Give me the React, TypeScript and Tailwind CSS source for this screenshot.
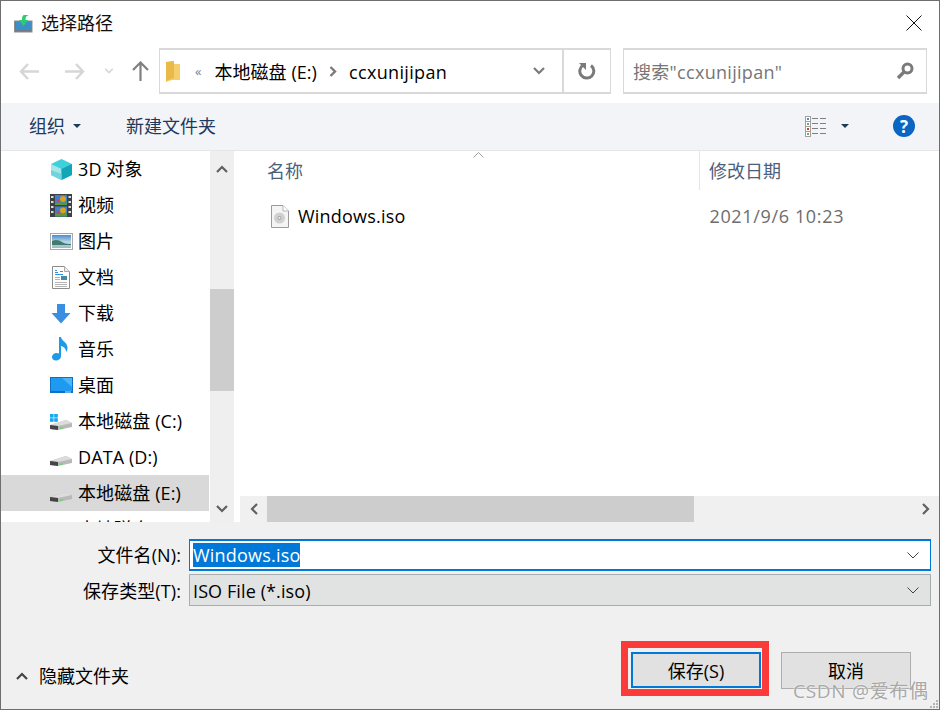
import type { ReactNode } from "react";

function CubeIcon() {
  return (
    <svg width="23" height="23" viewBox="0 0 23 23">
      <path d="M11.500 1 22 6v11l-10.500 5L1 17V6z" fill="#3fd0dc" />
      <path d="M1 6l10.500 5v11L1 17z" fill="#a5e6ea" />
      <path d="M11.500 11L22 6v11l-10.500 5z" fill="#12a5b8" />
      <path d="M1 12l10.500 4v6L1 17z" fill="#6fd4dc" />
    </svg>
  );
}

function VideoIcon() {
  return (
    <svg width="23" height="23" viewBox="0 0 23 23">
      <rect x="0" y="0" width="22" height="23" fill="#3c4145" />
      <rect x="1" y="2" width="2.500" height="2" fill="#ddd" />
      <rect x="1" y="7" width="2.500" height="2" fill="#ddd" />
      <rect x="1" y="12" width="2.500" height="2" fill="#ddd" />
      <rect x="1" y="17" width="2.500" height="2" fill="#ddd" />
      <rect x="18.500" y="2" width="2.500" height="2" fill="#ddd" />
      <rect x="18.500" y="7" width="2.500" height="2" fill="#ddd" />
      <rect x="18.500" y="12" width="2.500" height="2" fill="#ddd" />
      <rect x="18.500" y="17" width="2.500" height="2" fill="#ddd" />
      <rect x="5" y="1" width="12" height="10" fill="#3f7fd0" />
      <rect x="5" y="12.500" width="12" height="10" fill="#3f7fd0" />
      <rect x="5" y="8.500" width="12" height="2.500" fill="#5a9a3a" />
      <rect x="5" y="20" width="12" height="2.500" fill="#5a9a3a" />
      <circle cx="13" cy="5" r="3" fill="#d9a21f" />
      <circle cx="13" cy="16.500" r="3" fill="#d9a21f" />
      <circle cx="8" cy="7" r="1.500" fill="#d23c6a" />
      <circle cx="8" cy="18" r="1.500" fill="#d23c6a" />
    </svg>
  );
}

function PictureIcon() {
  return (
    <svg width="23" height="17" viewBox="0 0 23 17">
      <rect x="0.500" y="0.500" width="22" height="16" fill="#fff" stroke="#a9a9a9" />
      <defs>
        <linearGradient id="sky" x1="0" y1="0" x2="0" y2="1">
          <stop offset="0" stopColor="#4a8fd0" />
          <stop offset="0.550" stopColor="#bcd6e8" />
          <stop offset="1" stopColor="#9fb8c0" />
        </linearGradient>
      </defs>
      <rect x="2" y="2" width="19" height="13" fill="url(#sky)" />
      <path d="M2 8c4-2 7-1 10 1s6 2 9 2v1H2z" fill="#3f7d6a" />
    </svg>
  );
}

function DocumentIcon() {
  return (
    <svg width="18" height="23" viewBox="0 0 18 23">
      <path d="M.5.500h12l5 5v17H.5z" fill="#fff" stroke="#8d8d8d" />
      <path d="M12.500.500v5h5" fill="#eee" stroke="#aaa" />
      <path d="M3 6.500h3M8 5.500h3M3 8.500h8M3 4.500h2" stroke="#2f8fe0" />
      <rect x="9" y="10" width="6" height="4" fill="#4a8aa0" />
      <path d="M3 11.500h5M3 13.500h5M3 16.500h12M3 18.500h12M3 20.500h12" stroke="#b5b5b5" />
    </svg>
  );
}

function DownloadIcon() {
  return (
    <svg width="20" height="21" viewBox="0 0 20 21">
      <path d="M6 1h8v9h5.500L10 20.500.5 10H6z" fill="#3a8fe0" />
    </svg>
  );
}

function MusicIcon() {
  return (
    <svg width="18" height="24" viewBox="0 0 18 24">
      <path
        d="M7 0h2c.5 4 6.500 5 6.500 11 0 1.500-.5 3-1.500 4 .3-3-2.500-5.500-5-6v10c0 2.800-2.500 4.500-5 4.500S0 22 0 20s2-4 4.500-4c1 0 1.800.2 2.500.6z"
        fill="#1e9be8"
      />
    </svg>
  );
}

function DesktopIcon() {
  return (
    <svg width="23" height="16" viewBox="0 0 23 16">
      <rect width="23" height="16" fill="#0f6fc6" />
      <rect x="1" y="1" width="21" height="13" fill="#1e9bf0" />
      <path d="M12 1h10v9z" fill="#4db5f5" />
      <rect x="15" y="14.500" width="6" height="1" fill="#bfe3fa" />
    </svg>
  );
}

function DriveIcon({ windows }: { windows?: boolean }) {
  return (
    <svg width="23" height="18" viewBox="0 0 23 18">
      {windows && (
        <g fill="#14a9ee">
          <rect x="0" y="2" width="3.600" height="3.600" />
          <rect x="4.200" y="2" width="3.600" height="3.600" />
          <rect x="0" y="6.200" width="3.600" height="3.600" />
          <rect x="4.200" y="6.200" width="3.600" height="3.600" />
        </g>
      )}
      <path d="M0 13l16-5 6 3v4L8 18l-8-1z" fill="#b9b9b9" />
      <path d="M0 13l16-5 6 3-14 3z" fill="#dcdcdc" />
      <path d="M0 13l8 1v4l-8-1z" fill="#454545" />
      <path d="M10 16.500l3-.7" stroke="#5fd35f" />
    </svg>
  );
}

function SaveDialogIcon() {
  return (
    <svg width="19" height="19" viewBox="0 0 19 19">
      <rect x="0.500" y="7" width="17.500" height="11" fill="#6b7a85" stroke="#8a8f92" />
      <rect x="2" y="8" width="15" height="8" fill="#3d8fc8" />
      <path d="M10 1h4c0 0 .5 0 0 .5-2 .5-2.500 2-2.500 4.500H14l-4.500 6L5 6h3c0-3 .5-4.500 2-5z" fill="#2ecc71" />
    </svg>
  );
}

function Chevron({ up, className }: { up?: boolean; className?: string }) {
  return (
    <svg width="12" height="8" viewBox="0 0 12 8" className={className}>
      <path
        d={up ? "M1 7l5-5 5 5" : "M1 1l5 5 5-5"}
        fill="none"
        stroke="currentColor"
        strokeWidth="2.200"
      />
    </svg>
  );
}

function SmallCombo() {
  return (
    <svg width="12" height="7" viewBox="0 0 12 7">
      <path d="M.5.500l5.500 5.500 5.500-5.500" fill="none" stroke="#444" />
    </svg>
  );
}

function Caret({ color }: { color: string }) {
  return (
    <svg width="8" height="4" viewBox="0 0 8 4">
      <path d="M0 0h8L4 4z" fill={color} />
    </svg>
  );
}

function ViewIcon() {
  return (
    <svg width="22" height="21" viewBox="0 0 22 21">
      <rect x="0.500" y="0.500" width="5" height="20" fill="#fff" stroke="#a0a0a0" />
      <path d="M1 5.500h4M1 10.500h4M1 15.500h4" stroke="#a0a0a0" />
      <rect x="2" y="2" width="2" height="2" fill="#4a90c0" />
      <rect x="2" y="7" width="2" height="2" fill="#8aa060" />
      <rect x="2" y="12" width="2" height="2" fill="#d04020" />
      <rect x="2" y="17" width="2" height="2" fill="#8aa060" />
      <path d="M7 2.500h6M15 2.500h6M7 7.500h6M15 7.500h6M7 12.500h6M15 12.500h6M7 17.500h6M15 17.500h6" stroke="#808080" />
    </svg>
  );
}

function IsoIcon() {
  return (
    <svg width="18" height="23" viewBox="0 0 18 23">
      <path d="M.5.500h11.500l5.500 5.500v16.500H.5z" fill="#f4f4f4" stroke="#9a9a9a" />
      <path d="M12 .500V6h5.500" fill="#fff" stroke="#b5b5b5" />
      <circle cx="8.500" cy="13" r="5.500" fill="#d0d0d0" />
      <circle cx="8.500" cy="13" r="2" fill="#a8a8a8" />
      <circle cx="8.500" cy="13" r="1" fill="#eee" />
    </svg>
  );
}

function NavRow({ icon, label, selected }: { icon: ReactNode; label: string; selected?: boolean }) {
  return (
    <div className={`h-[36px] flex items-center shrink-0 ${selected ? "bg-[#d9d9d9]" : ""}`}>
      <div className="w-[49px] shrink-0" />
      <div className="w-[28px] shrink-0 flex justify-center -ml-[3px] mr-[3px]">{icon}</div>
      <span className="whitespace-nowrap tracking-[0.1px]">{label}</span>
    </div>
  );
}

export default function App() {
  return (
    <div className="relative w-[940px] h-[710px] overflow-hidden flex flex-col bg-white border border-[#6e6e6e] text-[18px] leading-[24px] text-black font-['Open_Sans','Noto_Sans_CJK_SC',sans-serif]">
      <div className="h-[44px] shrink-0 flex items-center pl-[13px] pr-[17px]">
        <SaveDialogIcon />
        <span className="ml-[8px] text-[#111]">选择路径</span>
        <svg width="16" height="16" viewBox="0 0 16 16" className="ml-auto">
          <path d="M.5.500l15 15M15.500.500l-15 15" stroke="#111" />
        </svg>
      </div>

      <div className="h-[58px] shrink-0 flex items-center pb-[6px] pl-[18px]">
        <svg width="20" height="17" viewBox="0 0 20 17">
          <path d="M9 1L2 8.500 9 16M2 8.500h18" fill="none" stroke="#d6d6d6" strokeWidth="2.500" />
        </svg>
        <svg width="20" height="17" viewBox="0 0 20 17" className="ml-[26px]">
          <path d="M11 1l7 7.500-7 7.500M18 8.500H0" fill="none" stroke="#d6d6d6" strokeWidth="2.500" />
        </svg>
        <Chevron className="ml-[18px] text-[#d6d6d6] scale-75" />
        <svg width="17" height="20" viewBox="0 0 17 20" className="ml-[17px]">
          <path d="M1 9l7.500-7.500L16 9M8.500 2v18" fill="none" stroke="#808080" strokeWidth="2.200" />
        </svg>
        <div className="ml-[10px] w-[452px] h-[46px] flex items-center border-2 border-[#d9d9d9] border-x-[1.500px]">
          <svg width="14" height="21" viewBox="0 0 14 21" className="ml-[6px]">
            <path d="M0 1l8-1v3h6v16H6l-6 2z" fill="#f5cf6b" />
            <path d="M0 1l8-1v17l-8 3z" fill="#e9b949" />
          </svg>
          <span className="ml-[15px] text-[#808080] text-[13px] leading-none">«</span>
          <span className="ml-[13px] mt-[1px] whitespace-nowrap tracking-[0.05px]">本地磁盘 (E:)</span>
          <svg width="8" height="11" viewBox="0 0 8 11" className="ml-[12px]">
            <path d="M1.500 1l4.500 4.500L1.500 10" fill="none" stroke="#7a7a7a" strokeWidth="2.400" />
          </svg>
          <span className="ml-[12px] mt-[1px] tracking-[0.35px]">ccxunijipan</span>
          <Chevron className="ml-auto mr-[17px] text-[#7a7a7a]" />
          <div className="self-stretch w-[2px] bg-[#d9d9d9]" />
          <svg width="18" height="18" viewBox="0 0 18 18" className="mx-[14px]">
            <path d="M13 3.500A7 7 0 1 1 5 3.200" fill="none" stroke="#7a7a7a" strokeWidth="3" />
            <path d="M1 1h7v7z" fill="#7a7a7a" />
          </svg>
        </div>
        <div className="ml-[12px] w-[304px] h-[46px] flex items-center border-2 border-[#d9d9d9] border-x-[1.500px] pl-[9px] pr-[12px] text-[#767676]">
          <span className="mt-[1px] tracking-[0.3px]">搜索"ccxunijipan"</span>
          <svg width="18" height="18" viewBox="0 0 18 18" className="ml-auto">
            <circle cx="11.500" cy="6.500" r="4.500" fill="none" stroke="#7a7a7a" strokeWidth="3" />
            <path d="M8 10l-6 6" stroke="#7a7a7a" strokeWidth="3.400" />
          </svg>
        </div>
      </div>

      <div className="h-[47px] shrink-0 flex items-center bg-[#f3f4f7] text-[#1e395b] pl-[28px] pb-[1px]">
        <span>组织</span>
        <span className="ml-[8px] flex">
          <Caret color="#1e395b" />
        </span>
        <span className="ml-[45px]">新建文件夹</span>
        <span className="ml-auto flex">
          <ViewIcon />
        </span>
        <span className="ml-[14px] flex">
          <Caret color="#1e395b" />
        </span>
        <div className="ml-[44px] mr-[24px] w-[22px] h-[22px] rounded-full bg-[#0a66c2] text-white flex items-center justify-center font-bold text-[17px] leading-none">
          ?
        </div>
      </div>

      <div className="flex-1 min-h-0 flex border-t border-[#e6e6e6]">
        <div className="w-[208px] shrink-0 flex flex-col overflow-hidden">
          <NavRow icon={<CubeIcon />} label="3D 对象" />
          <NavRow icon={<VideoIcon />} label="视频" />
          <NavRow icon={<PictureIcon />} label="图片" />
          <NavRow icon={<DocumentIcon />} label="文档" />
          <NavRow icon={<DownloadIcon />} label="下载" />
          <NavRow icon={<MusicIcon />} label="音乐" />
          <NavRow icon={<DesktopIcon />} label="桌面" />
          <NavRow icon={<DriveIcon windows />} label="本地磁盘 (C:)" />
          <NavRow icon={<DriveIcon />} label="DATA (D:)" />
          <NavRow icon={<DriveIcon />} label="本地磁盘 (E:)" selected />
          <NavRow icon={<DriveIcon />} label="本地磁盘 (F:)" />
        </div>
        <div className="w-[24px] ml-px shrink-0 flex flex-col bg-[#efefef] text-[#606060]">
          <div className="h-[36px] flex items-center justify-center">
            <Chevron up />
          </div>
          <div className="h-[102px] mt-[102px] bg-[#cdcdcd]" />
          <div className="mt-auto h-[26px] flex items-center justify-center">
            <Chevron />
          </div>
        </div>

        <div className="flex-1 min-w-0 ml-[6px] flex flex-col">
          <div className="relative h-[39px] shrink-0 flex items-center text-[#4c607a]">
            <span className="ml-[27px] mt-[1px]">名称</span>
            <svg width="11" height="6" viewBox="0 0 11 6" className="absolute left-[233px] top-[1px]">
              <path d="M.5 5.500l5-5 5 5" fill="none" stroke="#a0a0a0" />
            </svg>
            <div className="ml-[396px] w-px self-stretch bg-[#e5e5e5]" />
            <span className="ml-[9px] mt-[1px]">修改日期</span>
          </div>
          <div className="h-[52px] shrink-0 flex items-center">
            <div className="ml-[31px] flex">
              <IsoIcon />
            </div>
            <span className="ml-[9px] tracking-[0.2px]">Windows.iso</span>
            <span className="ml-[304px] text-[#6d6d6d] tracking-[0.65px]">2021/9/6 10:23</span>
          </div>
          <div className="mt-auto h-[26px] flex items-stretch bg-[#f0f0f0] text-[#606060]">
            <div className="w-[27px] flex items-center justify-center">
              <Chevron className="rotate-90" />
            </div>
            <div className="w-[427px] bg-[#cdcdcd]" />
            <div className="ml-auto w-[27px] flex items-center justify-center">
              <Chevron className="-rotate-90" />
            </div>
          </div>
        </div>
      </div>

      <div className="h-[187px] shrink-0 flex flex-col bg-[#f0f0f0] pt-[17px]">
        <div className="grid grid-cols-[180px_742px] gap-x-[8px] gap-y-[3px]">
          <span className="text-right self-center tracking-[0.1px]">文件名(N):</span>
          <div className="h-[32px] border-2 border-[#0078d7] border-x-[1.500px] bg-white flex items-center pl-[3px] pr-[11px]">
            <span className="bg-[#0078d7] text-white h-[24px] tracking-[0.2px]">Windows.iso</span>
            <span className="ml-auto flex">
              <SmallCombo />
            </span>
          </div>
          <span className="text-right self-center mt-[1px] tracking-[0.1px]">保存类型(T):</span>
          <div className="h-[32px] border border-[#a9acae] bg-[#e1e2e2] flex items-center pl-[3px] pr-[11px]">
            <span className="mt-[1px] tracking-[0.1px]">ISO File (*.iso)</span>
            <span className="ml-auto flex">
              <SmallCombo />
            </span>
          </div>
        </div>
        <div className="flex items-start mt-[46px]">
          <div className="flex items-center mt-[12px] ml-[15px]">
            <Chevron up className="text-[#444]" />
            <span className="ml-[11px]">隐藏文件夹</span>
          </div>
          <button
            type="button"
            className="ml-auto w-[130px] h-[36px] pt-[1px] border-2 border-[#0078d7] bg-[#e1e1e1]"
          >
            保存(S)
          </button>
          <button
            type="button"
            className="ml-[20px] mr-[28px] w-[130px] h-[37px] pt-[1px] border border-[#adadad] bg-[#e1e1e1]"
          >
            取消
          </button>
        </div>
      </div>

      {/* 截图上加的红框和水印 */}
      <div className="absolute left-[620px] top-[640px] w-[148px] h-[55px] border-[7px] border-[#fb3a3a] pointer-events-none" />
      <div className="absolute left-[792px] top-[678px] text-[19px] text-[#a8a8a8] tracking-[0.7px] [text-shadow:0_0_2px_#fff] pointer-events-none">
        CSDN @爱布偶
      </div>
      <svg width="10" height="10" viewBox="0 0 10 10" className="absolute right-0 bottom-0">
        <path d="M7 1h2v2H7zM4 4h2v2H4zM7 4h2v2H7zM1 7h2v2H1zM4 7h2v2H4zM7 7h2v2H7z" fill="#b5b5b5" />
      </svg>
    </div>
  );
}
